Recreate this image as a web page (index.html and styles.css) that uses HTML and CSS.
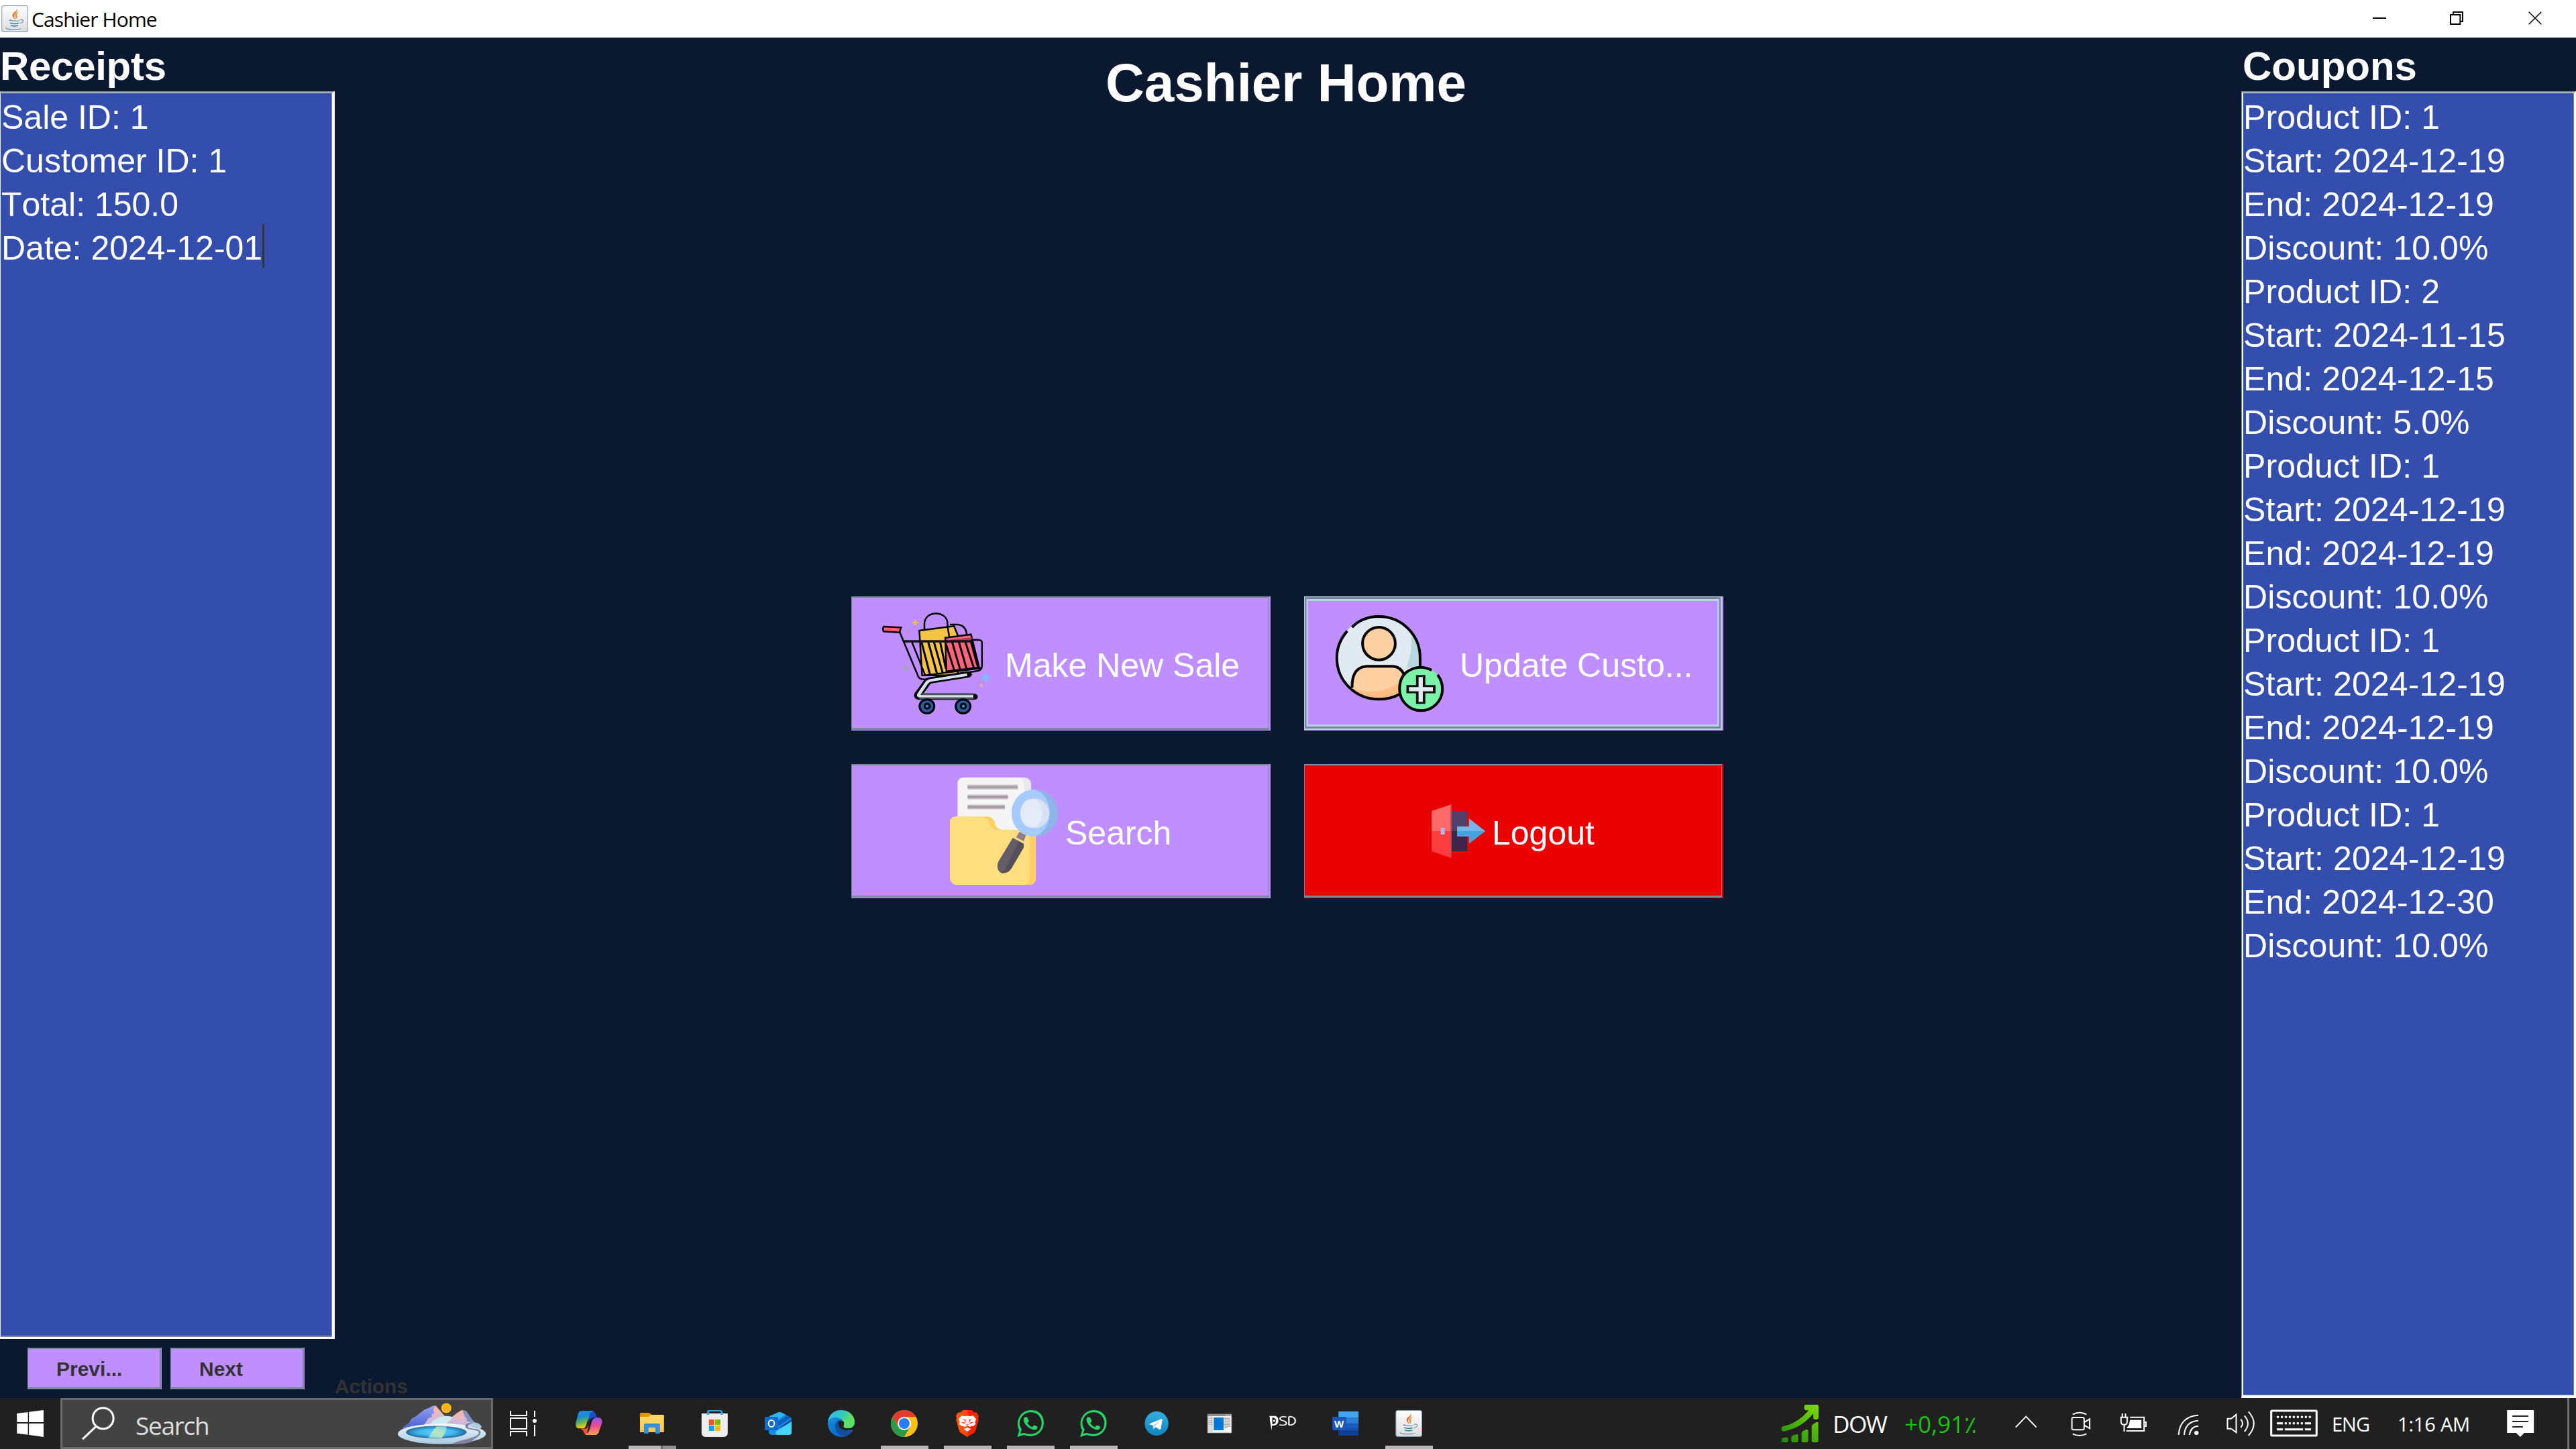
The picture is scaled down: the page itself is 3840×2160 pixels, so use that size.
FILE: index.html
```html
<!DOCTYPE html>
<html lang="en">
<head>
<meta charset="utf-8">
<title>Cashier Home</title>
<link rel="stylesheet" href="styles.css">
</head>
<body>
<svg class="defs" aria-hidden="true">
  <defs>
    <linearGradient id="jbg" x1="0" y1="0" x2="0" y2="1"><stop offset="0" stop-color="#fff"/><stop offset="1" stop-color="#dcdcdc"/></linearGradient>
    <symbol id="java" viewBox="6 24 112 120" preserveAspectRatio="none">
      <rect x="7.500" y="25.500" width="109" height="117" rx="9" fill="url(#jbg)" stroke="#7d93a8" stroke-width="3"/>
      <path d="M71 36c4 13-20 20-19 33 0 7 8 12 11 20 0-9-5-12-4-19 2-11 18-19 12-34z" fill="#e8741e"/>
      <path d="M79 52c-12 5-18 12-15 20 2 5 3 9-1 16 8-6 11-11 8-17-3-7 1-12 8-19z" fill="#f08a3c"/>
      <path d="M37 90c5-3 8-3 9-2-4 3 6 4 18 4 12 0 20-2 22-3-3 4-12 6-23 6-14 0-26-1-26-5z" fill="#5382a1"/>
      <path d="M84 88c10-3 15 1 12 7-3 6-9 9-14 10" fill="none" stroke="#5382a1" stroke-width="3"/>
      <path d="M42 103q17 6 36 0M45 114q15 5 31 0" fill="none" stroke="#5382a1" stroke-width="5"/>
      <path d="M35 119c-14 2-12 7 1 9 20 3 42 2 56-3-3 5-17 8-35 8-21 0-33-3-33-8 0-4 5-6 11-6z" fill="#5382a1"/>
    </symbol>
    <linearGradient id="bluegreen" x1="0" y1="0" x2="0.300" y2="1"><stop offset="0" stop-color="#2a9df0"/><stop offset=".35" stop-color="#1487dc"/><stop offset=".65" stop-color="#57ad60"/><stop offset="1" stop-color="#fbd008"/></linearGradient>
    <linearGradient id="pinkorange" x1="0" y1="0" x2="0" y2="1"><stop offset="0" stop-color="#9a50f0"/><stop offset=".5" stop-color="#ec4f92"/><stop offset="1" stop-color="#ffa24a"/></linearGradient>
    <linearGradient id="folder" x1="0" y1="0" x2="0" y2="1"><stop offset="0" stop-color="#ffdc70"/><stop offset="1" stop-color="#fdc63c"/></linearGradient>
    <linearGradient id="edgetop" x1="0" y1="0" x2="1" y2=".4"><stop offset="0" stop-color="#31bdf1"/><stop offset=".5" stop-color="#2fc6c6"/><stop offset="1" stop-color="#6be649"/></linearGradient>
    <linearGradient id="edgeleft" x1="0" y1="0" x2="0.400" y2="1"><stop offset="0" stop-color="#1b9be6"/><stop offset="1" stop-color="#0668c8"/></linearGradient>
    <linearGradient id="brave" x1="0" y1="0" x2="1" y2="0"><stop offset="0" stop-color="#ff5a00"/><stop offset=".5" stop-color="#ff4410"/><stop offset=".55" stop-color="#ff2000"/><stop offset="1" stop-color="#ff2800"/></linearGradient>
    <linearGradient id="tele" x1="0" y1="0" x2="0" y2="1"><stop offset="0" stop-color="#37aee2"/><stop offset="1" stop-color="#0f84bf"/></linearGradient>
    <linearGradient id="stocks" gradientUnits="userSpaceOnUse" x1="90" y1="240" x2="230" y2="80"><stop offset="0" stop-color="#1f8a12"/><stop offset="1" stop-color="#7bd80c"/></linearGradient>
    <linearGradient id="peak" x1="0" y1="0" x2="0" y2="1"><stop offset="0" stop-color="#ffb8a4"/><stop offset="1" stop-color="#b9b8f4"/></linearGradient>
    <linearGradient id="ridge" x1="0" y1="0" x2="0" y2="1"><stop offset="0" stop-color="#93a4f4"/><stop offset="1" stop-color="#4c5fd0"/></linearGradient>
    <linearGradient id="shore" x1="0" y1="0" x2="0" y2="1"><stop offset="0" stop-color="#f0f8ff"/><stop offset="1" stop-color="#a6cbe0"/></linearGradient>
    <radialGradient id="lake"><stop offset="0" stop-color="#5fd4ff"/><stop offset=".6" stop-color="#40b8ee"/><stop offset="1" stop-color="#1f6c9e"/></radialGradient>
    <linearGradient id="beam" x1="0" y1="1" x2="1" y2="0"><stop offset="0" stop-color="#8fe0e0"/><stop offset=".5" stop-color="#c8ecb8"/><stop offset="1" stop-color="#8fd8e8"/></linearGradient>
  </defs>
</svg>

<header class="titlebar">
  <svg class="titlebar-icon" viewBox="0 0 128.800 168" preserveAspectRatio="none"><use href="#java" x="6" y="24" width="112" height="120"/></svg>
  <span class="titlebar-text">Cashier Home</span>
  <div class="window-controls">
    <svg viewBox="510 0 345 168"><path d="M651 81H711" class="ctl"/></svg>
    <svg viewBox="855 0 345 168"><path d="M999 66H1042V108H999ZM1011 66V54H1053V96H1042" class="ctl"/></svg>
    <svg class="close" viewBox="1200 0 360 168"><path d="M1349 53L1405 109M1405 53L1349 109" class="ctl thin"/></svg>
  </div>
</header>

<main class="app">
  <section class="side left">
    <h2>Receipts</h2>
    <div class="panel">
      <p>Sale ID: 1</p>
      <p>Customer ID: 1</p>
      <p>Total: 150.0</p>
      <p><span class="caret">Date: 2024-12-01</span></p>
    </div>
    <div class="pager">
      <button>Previ...</button>
      <button>Next</button>
    </div>
  </section>

  <section class="center">
    <h1>Cashier Home</h1>
    <div class="actions">
      <button class="action sale">
        <svg viewBox="104.200 27 427.700 600" preserveAspectRatio="none">
          <path d="M280 195V150C280 88 362 88 362 150V205M370 153H398C420 156 430 175 430 205" class="ink"/>
          <path d="M262 180L385 160L398 200V380H272Z" fill="#f5c444" class="ink"/>
          <path d="M362 160L370 225" class="ink"/>
          <path d="M354 212L445 197L474 345L358 362Z" fill="#ff637b" class="ink"/>
          <path d="M360 230L450 218" stroke="#b23a50" stroke-width="14" fill="none"/>
          <path d="M270 232L300 378M294 232L325 375M314 232L345 370M336 232L356 350M354 232L386 358M378 230L407 356M402 230L430 354M425 230L456 350M445 230L470 345" class="ink bar"/>
          <path d="M236 232L283 380L480 348" class="ink"/>
          <path d="M192 185L258 385Q264 400 282 398L470 360Q485 355 484 335V232Q484 221 465 221L445 222" class="ink"/>
          <path d="M207 228H448" stroke="#17101f" stroke-width="10" fill="none"/>
          <path d="M136 162Q130 172 136 184L192 188L197 166Z" fill="#ff5f6d" class="ink"/>
          <path d="M434 376L300 403Q290 407 283 423L258 466Q255 476 266 476H455" fill="none" stroke="#000" stroke-width="28" stroke-linejoin="round" stroke-linecap="round"/>
          <path d="M431 377L300 403Q290 407 283 423L260 466Q258 474 266 474H453" fill="none" stroke="#d7e4ee" stroke-width="12"/>
          <path d="M272 464H455M262 483H455" stroke="#4b5157" stroke-width="9"/>
          <g fill="#2a5ca5"><ellipse cx="289" cy="519" rx="26" ry="31" class="ink wheel"/><ellipse cx="417" cy="519" rx="26" ry="31" class="ink wheel"/></g>
          <g fill="#3b86d5"><ellipse cx="290" cy="518" rx="9" ry="11" class="ink wheel"/><ellipse cx="418" cy="518" rx="9" ry="11" class="ink wheel"/></g>
          <path d="M248 132V156M237 144H259M482 418V432" stroke="#f5bd50" stroke-width="6"/>
          <path d="M497 374V407M486 391H509" stroke="#68c8fb" stroke-width="9"/>
          <path d="M224 179V192" stroke="#ed74c0" stroke-width="9"/><path d="M215 341V357" stroke="#8cb884" stroke-width="11"/>
        </svg>
        <span>Make New Sale</span>
      </button>
      <button class="action update">
        <svg viewBox="116.200 27 427.700 600" preserveAspectRatio="none">
          <ellipse cx="297" cy="302" rx="148" ry="186" fill="#e1eaf0"/>
          <path d="M412 190Q446 240 444 330L418 345H395Q420 270 412 190Z" fill="#b7d6de"/>
          <path d="M203 435C202 370 222 340 258 340H345C365 340 380 355 388 380L372 465Q350 486 297 487Q240 485 203 435Z" fill="#ffd0a2"/>
          <path d="M203 438Q300 480 380 405L370 468Q340 486 297 487Q240 485 203 438Z" fill="#ffbd84"/>
          <path d="M203 435C202 370 222 340 258 340H345C365 340 380 355 388 380" class="ink wide"/>
          <path d="M203 165Q240 117 297 117C380 117 444 200 444 302V345M186 182Q149 235 149 302C149 405 215 487 297 487Q340 487 370 465" class="ink wide"/>
          <ellipse cx="298" cy="238" rx="58" ry="73" fill="#ffd0a2" class="ink wide"/>
          <ellipse cx="447" cy="441" rx="76" ry="98" fill="#7bf2a8"/>
          <path d="M485 357Q450 335 420 350C385 365 371 400 371 441C371 495 405 538 447 538C489 538 523 495 523 441Q523 405 506 378" class="ink wide"/>
          <path d="M434 383H458V428H494V456H458V503H434V456H400V428H434Z" fill="#e1eaf0" stroke="#111" stroke-width="9"/>
        </svg>
        <span>Update Custo...</span>
      </button>
      <button class="action search">
        <svg viewBox="341.900 777 427.700 600" preserveAspectRatio="none">
          <path d="M398 858Q400 840 420 837H635Q656 840 658 865V1110H398Z" fill="#e9e9ed"/>
          <path d="M398 858Q400 840 420 837H615Q633 842 634 865V1110H398Z" fill="#f5f5f5"/>
          <path d="M433 880H611M433 924H576M433 969H565" stroke="#c4bcc4" stroke-width="21"/><path d="M433 880H611M433 924H576M433 969H565" stroke="#a0959f" stroke-width="7"/>
          <path d="M371 1030Q373 1013 395 1011H505Q528 1015 532 1050Q540 1071 560 1071H675V1290Q673 1315 655 1317H395Q373 1313 371 1290Z" fill="#ffcf65"/>
          <path d="M371 1030Q373 1013 395 1011H488Q505 1015 510 1045Q518 1071 545 1071H652V1290Q650 1315 635 1317H395Q373 1313 371 1290Z" fill="#ffde80"/>
          <path d="M616 1080L640 1095L632 1122L605 1105Z" fill="#8d7f8a"/>
          <path d="M593 1108L632 1133L632 1150L588 1245Q575 1268 555 1265Q540 1258 539 1232Q540 1215 550 1198Z" fill="#544f58"/>
          <path d="M593 1108L615 1122L565 1250Q555 1258 550 1262Q540 1255 539 1232Q540 1215 550 1198Z" fill="#655e68"/>
          <ellipse cx="671" cy="996" rx="82" ry="105" fill="#8cb4e9"/>
          <path d="M671 891C738 915 745 1065 671 1101C560 1098 563 893 671 891Z" fill="#a6ccff"/>
          <ellipse cx="671" cy="997" rx="51" ry="66" fill="#d8e1f3"/><ellipse cx="659" cy="997" rx="39" ry="64" fill="#e4ebf8"/>
        </svg>
        <span>Search</span>
      </button>
      <button class="action logout">
        <svg viewBox="460.800 777 237.600 600" preserveAspectRatio="none">
          <path d="M555 987H611V1077H555Z" fill="#523f68"/><path d="M555 1077H611V1167H555Z" fill="#3e264b"/>
          <path d="M485 987L555 957V1077H485Z" fill="#ff6b6b"/><path d="M485 1077H555V1197L485 1167Z" fill="#fb3d3e"/>
          <path d="M553 960V1194" stroke="#b84a60" stroke-width="4"/>
          <rect x="517" y="1062" width="14" height="30" fill="#b7b4e5"/>
          <path d="M575 1056H617V1020L675 1077H575Z" fill="#75b6e9"/><path d="M575 1077H675L617 1133V1101H575Z" fill="#44a3df"/>
        </svg>
        <span>Logout</span>
      </button>
    </div>
    <div class="actions-label">Actions</div>
  </section>

  <section class="side right">
    <h2>Coupons</h2>
    <div class="panel">
      <p>Product ID: 1</p><p>Start: 2024-12-19</p><p>End: 2024-12-19</p><p>Discount: 10.0%</p>
      <p>Product ID: 2</p><p>Start: 2024-11-15</p><p>End: 2024-12-15</p><p>Discount: 5.0%</p>
      <p>Product ID: 1</p><p>Start: 2024-12-19</p><p>End: 2024-12-19</p><p>Discount: 10.0%</p>
      <p>Product ID: 1</p><p>Start: 2024-12-19</p><p>End: 2024-12-19</p><p>Discount: 10.0%</p>
      <p>Product ID: 1</p><p>Start: 2024-12-19</p><p>End: 2024-12-30</p><p>Discount: 10.0%</p>
    </div>
  </section>
</main>

<footer class="taskbar">
  <svg class="start" viewBox="0 342 185.700 228" preserveAspectRatio="none"><path d="M52 411L86 405V450H52ZM89 404L134 396V450H89ZM52 456H86V506L52 500ZM89 456H134V516L89 507Z" fill="#fff"/></svg>
  <div class="searchbox">
    <svg class="glass" viewBox="185.700 342 227 228" preserveAspectRatio="none"><ellipse cx="317" cy="433" rx="32" ry="47" class="line w3"/><path d="M297 467L254 526" class="line w3"/></svg>
    <span>Search</span>
    <svg class="scene" viewBox="0 0 414 228">
      <path d="M28 135L60 112L72 92L88 84L130 52L150 44L165 36L178 34L220 82L190 140Z" fill="url(#peak)"/>
      <path d="M28 135L60 112L72 92L88 84L130 52L150 44L165 36L176 35L168 50L172 68L160 72L162 84L146 90L120 130Z" fill="url(#ridge)"/>
      <path d="M225 105L280 62L298 53L316 60L350 110L310 140H215Z" fill="url(#peak)"/>
      <path d="M298 54L318 62L334 86L355 112L336 108L316 104L318 94L308 82Z" fill="#8091c4"/>
      <path d="M140 130Q180 78 228 80Q262 82 250 92L205 135Z" fill="#cdeaf2"/>
      <path d="M320 125Q330 105 360 110Q375 112 385 130Z" fill="#a8c6d8"/>
      <ellipse cx="206" cy="160" rx="197" ry="46" fill="url(#shore)"/>
      <path d="M318 118Q350 108 385 132L370 140L330 128Z" fill="#b0cfdf"/>
      <ellipse cx="181" cy="153" rx="135" ry="27" fill="url(#lake)" stroke="#31678f" stroke-width="2"/>
      <path d="M145 178Q165 145 182 127H225Q232 145 205 180Z" fill="url(#beam)" opacity=".85"/>
      <path d="M348 109Q302 112 312 132C322 145 385 140 370 160C358 180 300 184 248 206Q290 210 335 198C350 180 385 170 378 148C365 132 310 142 325 121Z" fill="#84809b"/>
      <circle cx="226" cy="45" r="22" fill="#ffb020"/><circle cx="226" cy="45" r="20" fill="none" stroke="#ffc800" stroke-width="4"/>
    </svg>
  </div>
  <nav class="apps">
    <svg viewBox="441 0 282 228"><path d="M513 57V78H585V57M513 90H585V138H513ZM513 171V150H585V171M621 57V84M621 120V171" class="line u2"/><circle cx="621" cy="102" r="9" fill="#fff"/></svg>
    <svg viewBox="723 0 282 228">
      <path d="M868 57H880Q892 62 900 88H880Q868 92 858 110Z" fill="#1b4fd0"/>
      <path d="M826 137H850Q862 130 866 112L856 152Q862 165 850 165Q842 160 838 146Z" fill="#f2552e"/>
      <path d="M830 58H884Q872 62 866 78L850 125Q846 136 834 136H818Q802 134 805 112L815 72Q820 59 830 58Z" fill="url(#bluegreen)"/>
      <path d="M898 88H908Q925 90 922 112L908 152Q904 164 892 165H848Q860 160 866 142L878 102Q884 89 898 88Z" fill="url(#pinkorange)"/>
    </svg>
    <svg class="running multi" viewBox="402.900 42 204.700 228" preserveAspectRatio="none"><path d="M466 112Q466 108 469 108H495L504 116V130H466Z" fill="#dc9a00"/><path d="M466 126H494L503 117H541Q544 117 544 121V195H466Z" fill="url(#folder)"/><path d="M479 201V163Q479 156 485 156H525Q531 156 531 163V201H516V178Q516 174 512 174H498Q494 174 494 178V201Z" fill="#3591d8"/></svg>
    <svg viewBox="607.600 42 204.700 228" preserveAspectRatio="none"><path d="M666 111H751V200Q750 213 738 216H678Q667 213 666 200Z" fill="#eee"/><path d="M687 117V102Q687 99 691 99H727Q731 99 731 102V117" fill="none" stroke="#23a8f0" stroke-width="6"/><path d="M690 138H707V162H690Z" fill="#f25022"/><path d="M710 138H727V162H710Z" fill="#7fba00"/><path d="M690 165H707V189H690Z" fill="#00a4ef"/><path d="M710 165H727V189H710Z" fill="#ffb900"/></svg>
    <svg viewBox="-51 0 282 228">
      <path d="M50 82L92 64Q99 61 107 65L145 87Q150 90 150 98V152Q150 165 137 165H62Q49 165 48 150Z" fill="#1b8be0"/>
      <path d="M50 82L92 64Q99 61 122 74L70 108Z" fill="#2fb4f3"/><path d="M88 106L130 77L147 88L92 126Z" fill="#0c62c0"/><path d="M90 136L149 96V112L92 136Z" fill="#0644a0"/>
      <path d="M78 150L150 105V152Q150 165 137 165H90Q78 165 78 150Z" fill="#45d5fa"/>
      <rect x="30" y="84" width="60" height="60" rx="5" fill="#126cd0"/><ellipse cx="60" cy="114" rx="13" ry="15" fill="none" stroke="#fff" stroke-width="6"/>
    </svg>
    <svg viewBox="231 0 282 228">
      <circle cx="372" cy="114" r="60" fill="url(#edgeleft)"/>
      <path d="M312 108C316 72 342 54 372 54C408 54 432 80 432 106C432 126 418 135 402 135C388 135 380 130 384 122C392 105 380 96 366 92C350 80 322 86 312 108Z" fill="url(#edgetop)"/>
      <path d="M376 98C346 92 338 130 352 150C362 166 380 176 396 168C412 162 420 152 424 146C405 152 368 142 358 118Q360 100 376 98Z" fill="#114f9c"/>
      <path d="M384 108C378 100 366 100 360 108C354 126 374 146 400 145C412 146 424 140 424 146L436 132L430 118Q424 135 402 135C384 135 380 129 384 122Q388 114 384 108Z" fill="#202020"/>
      <path d="M384 122Q388 106 376 98Q392 92 420 96Q434 106 430 120Q424 135 402 135C384 135 380 129 384 122Z" fill="#5cdf66"/>
    </svg>
    <svg class="running" viewBox="513 0 282 228">
      <circle cx="654" cy="114" r="60" fill="#fbc116"/>
      <path d="M602 84A60 60 0 0 1 706 84H654L628 129Z" fill="#e33b2e"/><path d="M602 84A60 60 0 0 0 654 174L680 129H628Z" fill="#2c9a47"/>
      <circle cx="654" cy="114" r="30" fill="#fff"/><circle cx="654" cy="114" r="24" fill="#2b7cf0"/>
    </svg>
    <svg class="running" viewBox="795 0 282 228">
      <path d="M916 54H956L964 63L978 65L987 80L984 90L986 98L972 148Q970 153 962 158L936 174L910 158Q902 153 900 148L886 98L888 90L885 80L894 65L908 63Z" fill="url(#brave)"/>
      <path d="M910 79L925 82L936 79L947 82L962 79L975 94L970 108L973 116L962 126L955 124L950 130L936 124L922 130L917 124L910 126L899 116L902 108L897 94Z" fill="#fff"/>
      <path d="M936 131L952 139L936 150L920 139Z" fill="#fff"/><path d="M912 93L929 97L927 104L932 112L926 108L922 98ZM960 93L943 97L945 104L940 112L946 108L950 98ZM908 107L922 109L928 117L914 112ZM964 107L950 109L944 117L958 112ZM930 118H942L936 123Z" fill="#ff3a0c"/>
    </svg>
    <svg class="running" viewBox="106.500 42 204.700 228" preserveAspectRatio="none"><path id="wa" d="M166 216L173 187C164 165 166 138 176 120C188 98 208 92 226 99C245 107 254 132 252 160C250 190 232 213 210 213Q198 213 188 207ZM176 201L189 198C210 210 234 200 242 176C250 150 243 120 224 109C206 100 186 110 178 132C170 153 174 170 181 182Z" fill="#25d366" fill-rule="evenodd"/><path id="ph" d="M190 128Q196 125 199 129L204 145Q203 151 199 154Q205 168 215 172L220 164Q225 163 232 171Q233 180 225 184C213 187 190 165 187 143Q186 132 190 128Z" fill="#25d366"/></svg>
    <svg class="running" viewBox="107.200 42 204.700 228" preserveAspectRatio="none"><use href="#wa"/><use href="#ph"/></svg>
    <svg viewBox="515.900 42 204.700 228" preserveAspectRatio="none"><ellipse cx="618.500" cy="156" rx="38.500" ry="54" fill="url(#tele)"/><path d="M596 157L635 135Q638 134 637 140L632 180Q631 185 627 182L616 172L609 181L606 164L596 160Z" fill="#fff"/><path d="M606 164L630 144L613 169L609 181Z" fill="#b9d9ea"/></svg>
    <svg viewBox="720.600 42 204.700 228" preserveAspectRatio="none"><path d="M784 114H862V198H784Z" fill="#f4f4f4" stroke="#8c8c8c" stroke-width="2"/><path d="M784 114H862V123H784Z" fill="#8c8c8c"/><path d="M843 117H847V121H843ZM850 117H853V121H850ZM856 117H860V121H856Z" fill="#ddd"/><path d="M786 124H801V196H786Z" fill="#ddd"/><path d="M804 129H836V186H804Z" fill="#0078d7"/><path d="M838 133H858M838 140H858M838 147H858M838 154H858M838 161H858M838 168H858M838 175H849M788 133H791M794 133H799M788 143H791M794 143H799M788 152H791M794 152H799M788 161H791M794 161H799" stroke="#8c8c8c" stroke-width="3"/></svg>
    <svg viewBox="925.300 42 204.700 228" preserveAspectRatio="none"><path d="M984 122H1004Q1014 124 1014 144Q1013 164 998 166H993L992 188L986 140V128L984 122ZM994 130V158Q1006 160 1006 144Q1006 130 994 130Z" fill="#f4f4f4" fill-rule="evenodd"/><ellipse cx="1000" cy="144" rx="3" ry="5" fill="#fff"/><path d="M1040 127Q1020 122 1019 134C1019 145 1040 142 1040 155Q1038 167 1017 162M1048 125V163M1048 125C1076 122 1076 166 1048 163" fill="none" stroke="#f4f4f4" stroke-width="5"/></svg>
    <svg viewBox="1130 42 204.700 228" preserveAspectRatio="none"><path d="M1209 102H1274V129H1209Z" fill="#41a5ee"/><path d="M1209 129H1274V156H1209Z" fill="#2b7cd3"/><path d="M1209 156H1274V183H1209Z" fill="#185abd"/><path d="M1209 183H1274V210H1209Z" fill="#103f91"/><rect x="1189" y="126" width="45" height="60" rx="4" fill="#1a57bd"/><text x="1211" y="173" text-anchor="middle" class="word" textLength="31" lengthAdjust="spacingAndGlyphs">W</text></svg>
    <svg class="running" viewBox="1334.700 42 204.700 228" preserveAspectRatio="none"><use href="#java" x="1394" y="96" width="87" height="120"/></svg>
  </nav>
  <div class="tray">
    <svg viewBox="75.900 42 164.400 228" preserveAspectRatio="none"><path d="M90 228Q91 222 97 220L110 218Q115 218 115 223V234Q114 240 109 240H96Q90 240 90 234ZM127 218Q127 212 133 209L147 204Q153 204 153 210V234Q152 240 147 240H133Q127 240 127 234ZM166 200Q166 193 172 189L184 183Q191 181 191 188V234Q190 240 185 240H172Q166 240 166 234ZM204 170Q204 162 210 158L222 150Q229 147 229 155V234Q228 240 223 240H210Q204 240 204 234ZM176 78Q176 72 182 72H224Q230 72 230 79V130Q229 138 222 138H216Q210 138 210 130V111C180 155 145 180 100 191Q92 193 90 186V176Q90 170 97 168C135 160 165 135 193 97H182Q176 96 176 90Z" fill="url(#stocks)"/></svg>
    <span class="dow">DOW</span>
    <span class="pct">+0,91٪</span>
    <svg viewBox="885.200 42 252.900 228" preserveAspectRatio="none"><path d="M973 173L1012 125L1051 173" class="line u2"/></svg>
    <svg viewBox="1138 42 177 228" preserveAspectRatio="none"><rect x="1185" y="129" width="46" height="55" rx="6" class="line u2"/><path d="M1231 151L1252 136V178L1231 163M1188 115Q1213 99 1240 115M1188 202Q1213 218 1240 202" class="line u2"/></svg>
    <svg viewBox="1315 42 202.300 228" preserveAspectRatio="none"><path d="M1404 128H1457V189H1390M1457 150H1464V168H1457M1367 128H1397M1370 128V149Q1370 161 1382 161Q1393 161 1393 149V128M1375 128V111M1387 128V111M1382 161V192" class="line u2"/><path d="M1404 140H1447V177H1391L1400 162Z" fill="#fff"/></svg>
    <svg viewBox="0 342 202.300 228" preserveAspectRatio="none"><path d="M70 507C72 455 98 421 144 419M91 507C93 470 108 446 144 443M111 507C113 484 122 469 144 467" class="line u2"/><ellipse cx="137" cy="498" rx="8" ry="9" fill="#fff"/></svg>
    <svg viewBox="202.300 342 177 228" preserveAspectRatio="none"><path d="M254 434H268L287 416V496L268 479H254ZM304 437Q318 456 304 474M318 421Q344 456 318 492M333 403Q374 456 333 510" class="line u2"/></svg>
    <svg viewBox="379.400 342 252.900 228" preserveAspectRatio="none"><rect x="419" y="399" width="171" height="111" rx="3" class="line w3"/><path d="M440 427H570" stroke="#fff" stroke-width="9" stroke-dasharray="8 7.100"/><path d="M440 455H463M546 455H569M440 482H463M470 482H539M546 482H569" stroke="#fff" stroke-width="9"/><path d="M470 455H540" stroke="#fff" stroke-width="9" stroke-dasharray="8 7.100"/></svg>
    <span class="lang">ENG</span>
    <span class="clock">1:16 AM</span>
    <svg viewBox="1264.500 342 270.600 228" preserveAspectRatio="none"><path d="M1308 396H1409V498H1373L1358 516L1342 498H1308Z" fill="#fff"/><path d="M1328 423H1388M1328 447H1388M1328 471H1368" stroke="#202020" stroke-width="6"/></svg>
    <i class="peek"></i>
  </div>
</footer>
</body>
</html>
```
FILE: styles.css
```css
* { box-sizing: border-box; }
body {
  margin: 0;
  width: 3840px;
  height: 2160px;
  overflow: hidden;
  display: grid;
  grid-template-rows: 56px 2028px 76px;
  background: #0a192f;
  font-family: "Liberation Sans", Arial, sans-serif;
  font-kerning: none;
}
.defs { position: absolute; width: 0; height: 0; }
h1, h2, p { margin: 0; }
svg { display: block; }
button { font: inherit; font-kerning: none; margin: 0; border-radius: 0; text-align: left; }

.titlebar { display: flex; background: #fff; }
.titlebar-icon { width: 46px; height: 56px; }
.titlebar-text {
  padding-left: 1px;
  font-family: "Open Sans", "Noto Sans", sans-serif;
  font-size: 30px;
  line-height: 58px;
  letter-spacing: -0.9px;
  color: #000;
}
.window-controls { display: flex; margin-left: auto; }
.window-controls svg { width: 115px; height: 56px; }
.window-controls .close { width: 120px; }
.ctl { fill: none; stroke: #000; stroke-width: 6; }
.thin { stroke-width: 4.500; }

.app { display: grid; grid-template-columns: 499px 1fr 499px; }
.side { display: flex; flex-direction: column; color: #fff; }
.side h2 { height: 80px; padding-top: 5px; font-size: 60px; line-height: 75px; letter-spacing: -0.3px; }
.right h2 { padding-left: 2px; letter-spacing: 0; }
.panel {
  background: #344ead;
  border-style: solid;
  border-color: #7a8a99 #fff #fff #e8ecf0;
  border-width: 2px 4px 3px 1px;
  box-shadow: inset 0 1px #e8ecf0, inset -1px -2px #7a8a99;
  padding: 5px 0 0 1px;
  font-size: 50px;
  line-height: 65px;
  white-space: nowrap;
}
.left .panel { height: 1860px; }
.right .panel {
  flex: 1;
  border-color: #7a8a99 #fff #fff #7a8a99;
  border-width: 2px 3px 4px 1px;
  box-shadow: inset 2px 1px #f4f6f8, inset -1px -1px #7a8a99;
  padding-left: 2px;
}
.right .panel p { letter-spacing: 0.1px; }
.caret { position: relative; }
.caret::after {
  content: "";
  position: absolute;
  right: -3px;
  top: -8px;
  width: 3px;
  height: 65px;
  background: #333;
}
.pager { display: flex; gap: 13px; padding: 13px 0 0 41px; }
.pager button {
  width: 200px;
  height: 62px;
  padding: 1px 0 0 43px;
  border: 0 solid #c08fff;
  border-right-width: 1px;
  background: #c08fff;
  box-shadow: inset 1px 2px #7a8a99, inset -2px -3px #7a8a99;
  color: #333;
  font-size: 30px;
  font-weight: bold;
}

.center { display: flex; flex-direction: column; }
.center h1 {
  padding: 22px 6px 0 0;
  font-size: 80px;
  line-height: 92px;
  text-align: center;
  color: #fff;
}
.actions {
  display: grid;
  grid-template-columns: 625px 625px;
  grid-auto-rows: 200px;
  gap: 50px;
  margin: 719px 0 0 770px;
}
.action {
  display: flex;
  padding: 0;
  border: 0 solid #c08fff;
  border-width: 0 2px 1px 0;
  background: #c08fff;
  box-shadow: inset 1px 2px #7a8a99, inset -1px -3px #7a8a99;
  color: #fff;
  font-size: 50px;
  line-height: 207px;
  white-space: nowrap;
}
.action svg { width: 180px; height: 200px; margin-left: 35px; }
.sale span { margin-left: 14px; }
.update {
  box-shadow: inset 1px 1px #b8cfe5, inset -2px -2px #b8cfe5,
    inset 3px 4px #7a8a99, inset -4px -5px #7a8a99,
    inset 4px 4px #c08fff, inset -5px -5px #c08fff,
    inset 6px 7px #b8cfe5, inset -7px -8px #b8cfe5;
}
.update span { margin-left: 17px; }
.search svg { margin-left: 135px; }
.search span { margin-left: 4px; }
.logout { background: #eb0000; border-color: #eb0000; }
.logout svg { width: 100px; margin-left: 180px; }
.ink { stroke: #000; stroke-width: 2.500px; vector-effect: non-scaling-stroke; }
path.ink:not([fill]) { fill: none; }
.wheel { stroke-width: 3px; }
.wide { stroke-width: 4px; }
.bar { stroke-width: 3px; }
.actions-label { margin-top: auto; font-size: 30px; font-weight: bold; line-height: 35px; letter-spacing: -0.2px; color: #333; }

.taskbar { display: flex; background: #202020; color: #fff; font-family: "Open Sans", "Noto Sans", sans-serif; }
.taskbar svg { height: 76px; }
.start { width: 90px; }
.searchbox {
  display: flex;
  width: 645px;
  background: #434343;
  box-shadow: inset 0 0 0 3px #6a6a6a;
}
.glass { width: 110px; }
.searchbox span { flex: 1; padding-left: 2px; font-size: 37px; line-height: 82px; letter-spacing: -1.3px; color: #ddd; }
.scene { width: 138px; margin-right: 7px; }
.line { fill: none; stroke: #fff; vector-effect: non-scaling-stroke; }
.w3 { stroke-width: 3px; }
.u2 { stroke-width: 2px; }
.word { font: bold 40px "Open Sans", sans-serif; fill: #fff; }
.apps { display: flex; padding-left: 2px; }
.apps svg { width: 94px; }
.running { background: linear-gradient(#b9b6b7, #b9b6b7) 12px 71px / 71px 5px no-repeat; }
.multi { background: linear-gradient(90deg, #b9b6b7 48px, #6e6c6d 48px 51px, #918f90 51px) 12px 71px / 71px 5px no-repeat; }
.tray {
  display: grid;
  grid-template-columns: 65px 122px 133px 100px 70px 80px 80px 70px 100px 90px 160px 107px 3px 10px;
  margin-left: auto;
  white-space: nowrap;
}
.tray svg { width: 100%; }
.dow { padding-left: 17px; font-size: 35px; line-height: 78px; letter-spacing: -1.5px; }
.pct { padding-left: 2px; font-size: 35px; line-height: 78px; letter-spacing: -0.3px; color: #16c60c; }
.lang { padding-left: 6px; font-size: 29px; line-height: 78px; letter-spacing: -1px; }
.clock { padding-left: 14px; font-size: 29px; line-height: 78px; letter-spacing: -0.2px; }
.peek { background: #6f6f6f; }
```
